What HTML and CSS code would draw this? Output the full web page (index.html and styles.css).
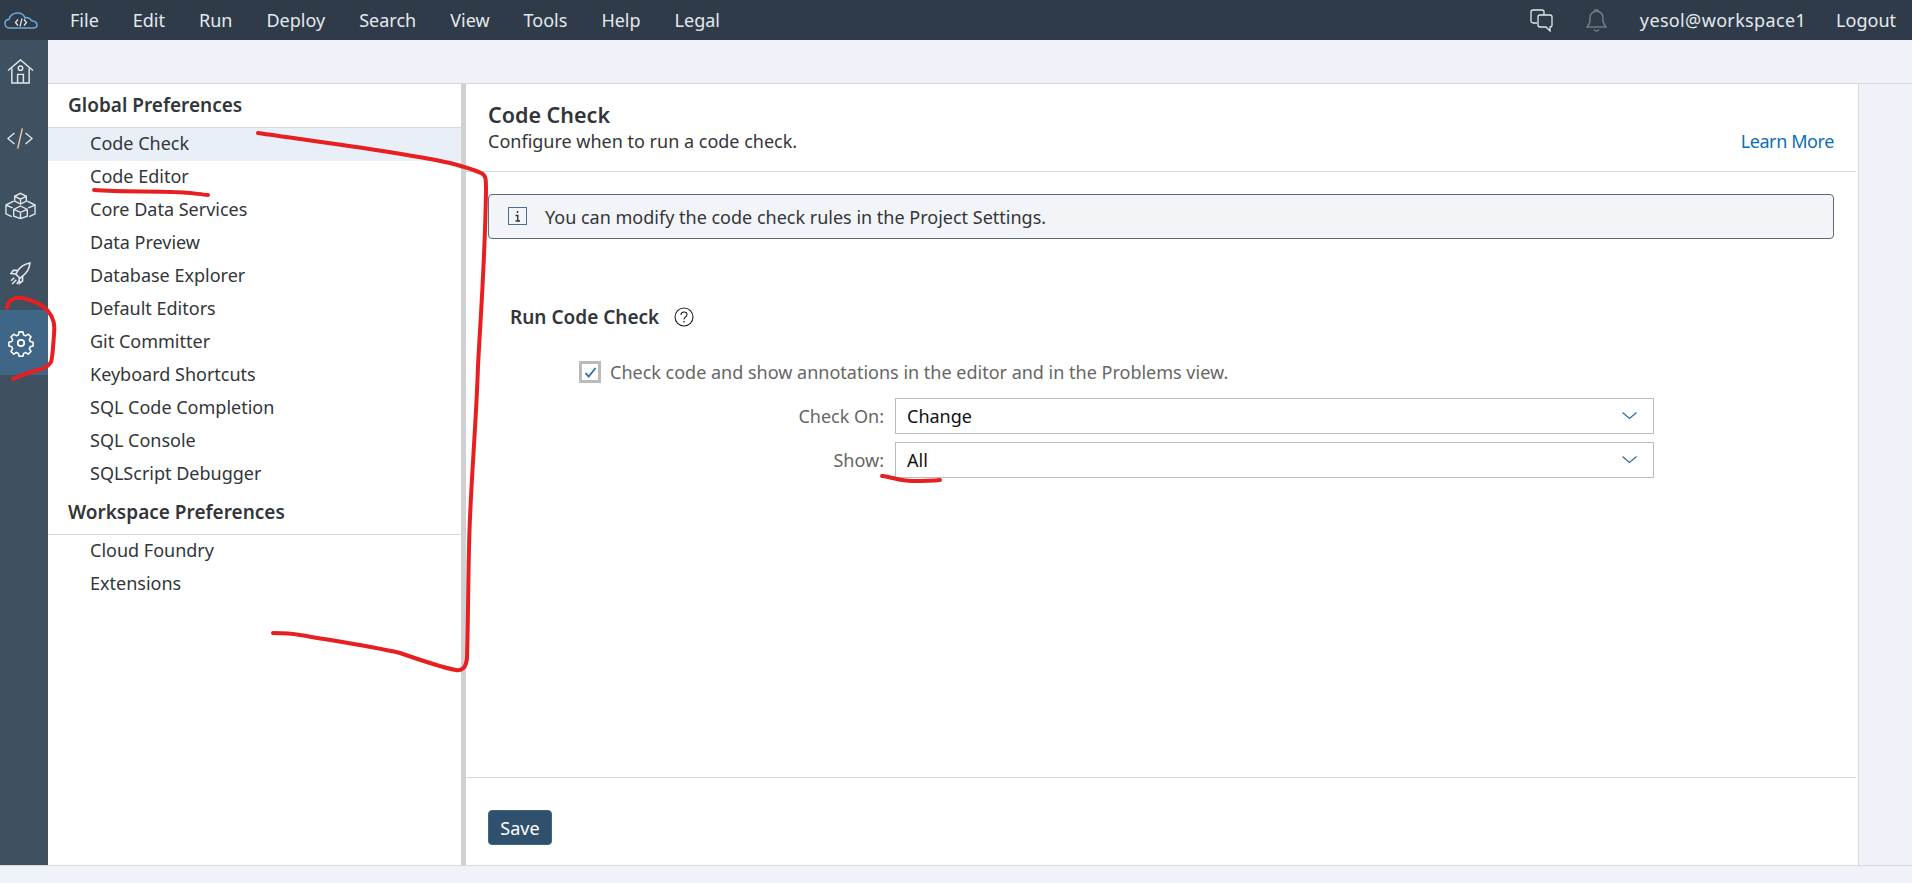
FILE: index.html
```html
<!DOCTYPE html>
<html lang="en">
<head>
  <meta charset="UTF-8" />
  <meta name="viewport" content="width=device-width, initial-scale=1.0" />
  <title>Preferences</title>
  <link rel="stylesheet" href="styles.css">
</head>
<body>
  <header class="topbar">
    <svg class="logo" viewBox="0 0 34 17" fill="none" stroke="#6fa8d6" stroke-width="1.500">
      <path d="M8 16H6C3 16 1 14 1 11.500 1 9 3 7.500 5 7.200 6 3.500 9.500 1 13.500 1 17 1 20 3 21 6 22 5.500 23.500 5.500 24.500 6 26 6.500 27 7.500 27.300 8.500 30.500 9 33 10.500 33 13 33 15 31 16 29 16z"/>
      <path d="M14 7.500l-2.500 3 2.500 3M20 7.500l2.500 3-2.500 3" stroke="#e6edf3" stroke-width="1.200"/>
      <path d="M18 6.500l-2 8" stroke="#e6edf3" stroke-width="1.200"/>
    </svg>
    <nav class="menu">
      <span>File</span>
      <span>Edit</span>
      <span>Run</span>
      <span>Deploy</span>
      <span>Search</span>
      <span>View</span>
      <span>Tools</span>
      <span>Help</span>
      <span>Legal</span>
    </nav>
    <div class="topbar-right">
      <svg class="top-icon" viewBox="0 0 23 23" fill="none" stroke="#e3e8ec" stroke-width="1.300">
        <path d="M7 14H3a2 2 0 0 1-2-2V3a2 2 0 0 1 2-2h9a2 2 0 0 1 2 2v3"/>
        <path d="M10 6h10a2 2 0 0 1 2 2v8a2 2 0 0 1-2 2v4l-4-4h-6a2 2 0 0 1-2-2V8a2 2 0 0 1 2-2z"/>
      </svg>
      <svg class="top-icon bell" viewBox="0 0 21 23" fill="none" stroke="#6e7a85" stroke-width="1.500">
        <path d="M1 18c2-2 3-3.500 3-7V8.500C4 5 6.800 2.300 10.500 2.300S17 5 17 8.500V11c0 3.500 1 5 3 7z"/>
        <path d="M8.500 2.300c0-2 4-2 4 0M8 20.500c1.500 2 3.500 2 5 0" />
      </svg>
      <span class="user">yesol@workspace1</span>
      <span class="logout">Logout</span>
    </div>
  </header>

  <div class="main">
    <aside class="rail">
      <div class="rail-item">
        <svg class="icon-home" viewBox="0 0 28 26" fill="none" stroke="#e4e8ec" stroke-width="1.500">
          <path d="M1 12L14 1l13 11"/>
          <path d="M5 9.500V25h18V9.500"/>
          <circle cx="14" cy="9.500" r="2.300"/>
          <path d="M11 25v-9h6v9"/>
        </svg>
      </div>
      <div class="rail-item">
        <svg class="icon-code" viewBox="0 0 28 24" fill="none" stroke="#e4e8ec" stroke-width="1.500">
          <path d="M8 6l-7 6 7 6M20 6l7 6-7 6"/>
          <path d="M16.500 1l-5 22" stroke="#e8cfa8"/>
        </svg>
      </div>
      <div class="rail-item">
        <svg class="icon-cubes" viewBox="0 0 34 28" fill="none" stroke="#e4e8ec" stroke-width="1.400">
          <path d="M17 1l6 3v5l-6 3-6-3V4zM11 4l6 3 6-3M17 7v5"/>
          <path d="M17 14l7 3.500v7L17 27l-7-2.500v-7zM10 17.500l7 3 7-3M17 20.500V27"/>
          <path d="M10 9L2 13v9l6 3M24 9l8 4v9l-6 3M2 13l7 3M32 13l-7 3"/>
        </svg>
      </div>
      <div class="rail-item">
        <svg class="icon-rocket" viewBox="0 0 20 22" fill="none" stroke="#e4e8ec" stroke-width="1.500">
          <path d="M19 1C14 2 10 4 7 9L5.500 11.500l4 4L12 13.500C16 10.500 18.500 7 19 1z"/>
          <path d="M7 8H3L1 11l4.500.5M12 13.500V18l-3 2.500-.2-5.500"/>
          <path d="M4 15l-3 3M6 17l-4 4M8.500 18l-2 3"/>
        </svg>
      </div>
      <div class="rail-item active">
        <svg class="icon-gear" viewBox="0 0 26 26" fill="none" stroke="#fff" stroke-width="1.600" stroke-linejoin="round">
          <circle cx="13" cy="13" r="3"/>
          <path d="M11 1.500h4l.7 3.200 2 .9 2.800-1.700 2.800 2.800-1.700 2.800.9 2 3 .7v4l-3 .7-.9 2 1.700 2.800-2.800 2.800-2.800-1.700-2 .9-.7 3h-4l-.7-3-2-.9-2.800 1.700-2.800-2.800 1.700-2.800-.9-2-3-.7v-4l3-.7.9-2-1.700-2.800 2.800-2.800 2.800 1.700 2-.9z" transform="translate(1.300 1.300) scale(.9)"/>
        </svg>
      </div>
    </aside>

    <div class="workspace">
      <div class="subheader"></div>
      <div class="panes">
        <section class="prefs">
          <h2 class="prefs-title">Global Preferences</h2>
          <ul class="prefs-list">
            <li class="selected">Code Check</li>
            <li>Code Editor</li>
            <li>Core Data Services</li>
            <li>Data Preview</li>
            <li>Database Explorer</li>
            <li>Default Editors</li>
            <li>Git Committer</li>
            <li>Keyboard Shortcuts</li>
            <li>SQL Code Completion</li>
            <li>SQL Console</li>
            <li>SQLScript Debugger</li>
          </ul>
          <h2 class="prefs-title">Workspace Preferences</h2>
          <ul class="prefs-list">
            <li>Cloud Foundry</li>
            <li>Extensions</li>
          </ul>
        </section>

        <section class="content">
          <div class="content-head">
            <div>
              <h1>Code Check</h1>
              <p>Configure when to run a code check.</p>
            </div>
            <a class="learn" href="#">Learn More</a>
          </div>

          <div class="content-body">
            <div class="info">
              <svg class="info-icon" viewBox="0 0 20 20" fill="none">
                <rect x=".5" y=".5" width="18" height="17" stroke="#4c6f8f"/>
                <path d="M9.500 4v2M7.500 8.500h2.300V14M7.500 14h4.500" stroke="#333" stroke-width="1.400"/>
              </svg>
              <span>You can modify the code check rules in the Project Settings.</span>
            </div>

            <div class="group-title">
              <span>Run Code Check</span>
              <svg class="help" viewBox="0 0 20 20" fill="none" stroke="#222" stroke-width="1.100">
                <circle cx="10" cy="10" r="9"/>
                <path d="M7 8c0-4 6-4 6-.5 0 2.500-3 2.500-3 5"/>
                <path d="M10 14v1.500" stroke-width="1.300"/>
              </svg>
            </div>

            <div class="check-row">
              <span class="check">
                <svg viewBox="0 0 14 12" fill="none" stroke="#2f6ea5" stroke-width="1.900">
                  <path d="M1.500 6.500l3.500 4 7.500-9.500"/>
                </svg>
              </span>
              <span>Check code and show annotations in the editor and in the Problems view.</span>
            </div>

            <div class="field">
              <label>Check On:</label>
              <div class="select">
                <span>Change</span>
                <svg class="chevron" viewBox="0 0 15 8" fill="none" stroke="#34658f" stroke-width="1.100"><path d="M.5.500l7 6 7-6"/></svg>
              </div>
            </div>
            <div class="field">
              <label>Show:</label>
              <div class="select">
                <span>All</span>
                <svg class="chevron" viewBox="0 0 15 8" fill="none" stroke="#34658f" stroke-width="1.100"><path d="M.5.500l7 6 7-6"/></svg>
              </div>
            </div>
          </div>

          <div class="content-foot">
            <button class="save" type="button">Save</button>
          </div>
        </section>
        <div class="gutter"></div>
      </div>
    </div>
  </div>
  <div class="statusbar"></div>

  <!-- red marks drawn over the page -->
  <svg class="marks" viewBox="0 0 1912 883" fill="none" stroke="#e81f20" stroke-width="4" stroke-linecap="round" stroke-linejoin="round">
    <path d="M258 133C320 142 400 152 450 163C465 167 475 170 481 173C486 175 486 179 486 190C485 260 481 310 478 366C476 430 470 490 469 549C468 590 468 630 467 658C466 668 462 671 456 670C440 667 420 660 400 653C370 646 335 641 300 635C290 633 280 633 273 633"/>
    <path d="M94 190C120 192 150 191 173 192C185 192 197 194 208 195"/>
    <path d="M7 308C8 300 14 297 22 298C32 300 42 303 48 311C54 318 55 325 54 335C53 345 53 355 51 362C48 367 44 368 38 370C30 372 20 376 13 379"/>
    <path d="M882 476C892 477 900 481 912 481C920 481 930 481 940 480"/>
  </svg>
</body>
</html>
```

FILE: styles.css
```css
html, body {
  height: 100%;
  margin: 0;
}
body {
  display: flex;
  flex-direction: column;
  position: relative;
  overflow: hidden;
  font-family: "Noto Sans", Arial, sans-serif;
  font-size: 18px;
  color: #32363a;
  background-color: #eff2f8;
}

/* top bar */
.topbar {
  display: flex;
  align-items: center;
  flex: 0 0 40px;
  background-color: #2f3b49;
  color: #e4e9ee;
}
.logo {
  width: 34px;
  height: 17px;
  margin-left: 4px;
}
.menu {
  display: flex;
  gap: 34px;
  margin-left: 32px;
}
.topbar-right {
  display: flex;
  align-items: center;
  margin-left: auto;
  padding-right: 16px;
}
.top-icon {
  width: 23px;
  height: 23px;
}
.bell {
  width: 21px;
  margin-left: 33px;
  margin-right: 33px;
}
.user {
  letter-spacing: .35px;
}
.logout {
  margin-left: 30px;
}

/* main area */
.main {
  display: flex;
  flex: 1;
  min-height: 0;
}
.rail {
  display: flex;
  flex-direction: column;
  gap: 5.5px;
  flex: 0 0 48px;
  background-color: #3f5161;
}
.rail-item {
  display: flex;
  align-items: center;
  justify-content: center;
  height: 62px;
  padding-right: 8px;
}
.rail-item.active {
  height: 65px;
  padding-right: 6px;
  background-color: #3f6587;
}
.icon-home {
  width: 27px;
  height: 25px;
}
.icon-code {
  width: 26px;
  height: 23px;
}
.icon-cubes {
  width: 33px;
  height: 28px;
}
.icon-rocket {
  width: 21px;
  height: 23px;
}
.icon-gear {
  width: 28px;
  height: 28px;
}
.workspace {
  display: flex;
  flex-direction: column;
  flex: 1;
  min-width: 0;
}
.subheader {
  flex: 0 0 43px;
  border-bottom: 1px solid #d9d9d9;
}
.panes {
  display: flex;
  flex: 1;
  min-height: 0;
}
.gutter {
  flex: 0 0 53px;
  border-left: 1px solid #d9d9d9;
  background-color: #eff2f8;
}
.statusbar {
  flex: 0 0 17px;
  border-top: 1px solid #d9d9d9;
}

/* preferences list */
.prefs {
  flex: 0 0 413px;
  background-color: #fff;
  border-right: 5px solid #d0d0d0;
}
.prefs-title {
  margin: 0;
  padding: 0 20px;
  height: 44px;
  line-height: 42px;
  font-size: 19px;
  font-weight: 600;
  border-bottom: 1px solid #d9d9d9;
  box-sizing: border-box;
}
.prefs-list {
  list-style: none;
  margin: 0;
  padding: 0;
}
.prefs-list li {
  height: 33px;
  line-height: 31px;
  padding-left: 42px;
}
.prefs-list li.selected {
  background-color: #e8eff7;
}

/* right side */
.content {
  display: flex;
  flex-direction: column;
  flex: 1;
  min-width: 0;
  background-color: #fff;
}
.content-head {
  display: flex;
  align-items: flex-end;
  justify-content: space-between;
  height: 88px;
  box-sizing: border-box;
  margin-right: 2px;
  padding: 16px 22px 18px;
  border-bottom: 1px solid #d9d9d9;
}
.content-head h1 {
  margin: 0 0 1px;
  font-size: 21.5px;
  font-weight: 600;
  line-height: 26px;
}
.content-head p {
  margin: 0;
  line-height: 24px;
}
.learn {
  color: #0b6fb8;
  letter-spacing: -.4px;
  text-decoration: none;
  line-height: 24px;
}
.content-body {
  flex: 1;
  padding: 22px 24px 0 22px;
}
.info {
  display: flex;
  align-items: center;
  height: 45px;
  box-sizing: border-box;
  padding-left: 19px;
  background-color: #f2f4f7;
  border: 1px solid #5b6b7a;
  border-radius: 4px;
}
.info-icon {
  width: 20px;
  height: 20px;
  margin-right: 17px;
}
.group-title {
  display: flex;
  align-items: center;
  margin: 65px 0 0 22px;
  height: 26px;
  font-size: 19px;
  font-weight: 600;
}
.help {
  width: 20px;
  height: 20px;
  margin-left: 15px;
}
.check-row {
  display: flex;
  align-items: center;
  margin: 30px 0 0 91px;
  height: 24px;
  color: #666;
}
.check {
  display: flex;
  align-items: center;
  justify-content: center;
  width: 22px;
  height: 22px;
  box-sizing: border-box;
  margin-right: 9px;
  border: 3px solid #bbb;
}
.check svg {
  width: 13px;
  height: 11px;
}
.field {
  display: flex;
  align-items: center;
  margin-top: 8px;
  color: #666;
}
.check-row + .field {
  margin-top: 14px;
}
.field label {
  width: 407px;
  padding-right: 11px;
  box-sizing: border-box;
  text-align: right;
}
.select {
  display: flex;
  align-items: center;
  justify-content: space-between;
  width: 759px;
  height: 36px;
  box-sizing: border-box;
  padding: 0 16px 0 11px;
  border: 1px solid #bbb;
  color: #111;
}
.chevron {
  width: 15px;
  height: 8px;
}
.content-foot {
  flex: 0 0 88px;
  box-sizing: border-box;
  margin-right: 2px;
  padding: 32px 22px 0;
  border-top: 1px solid #d9d9d9;
}
.save {
  width: 64px;
  height: 35px;
  padding: 0;
  font-family: inherit;
  font-size: 18px;
  color: #fff;
  background-color: #30516e;
  border: 1px solid #3f6587;
  border-radius: 4px;
}

/* hand drawn marks */
.marks {
  position: absolute;
  top: 0;
  left: 0;
  width: 1912px;
  height: 883px;
  pointer-events: none;
}
```
